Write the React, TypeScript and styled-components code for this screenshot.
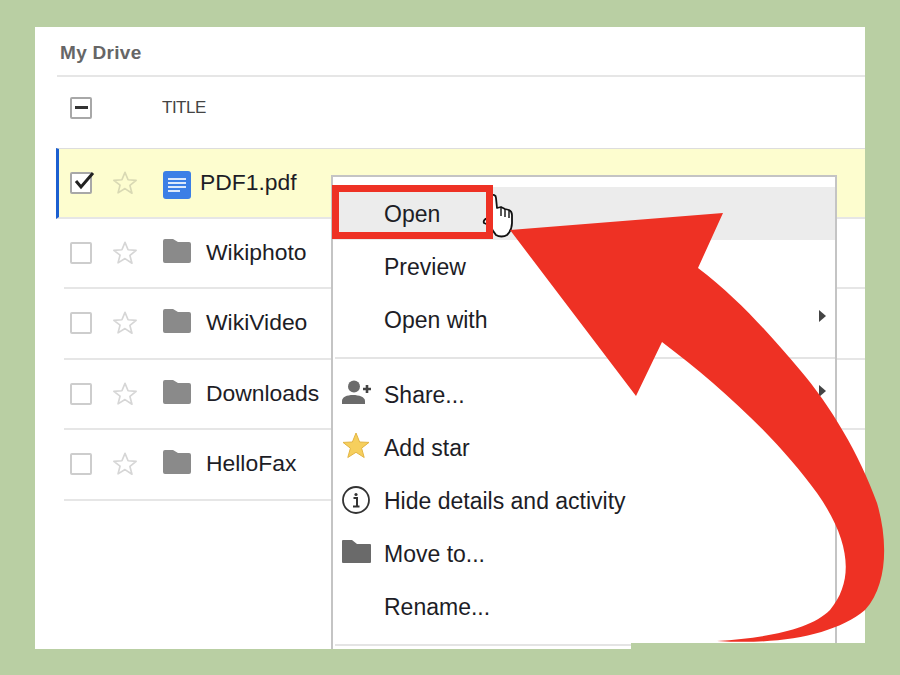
import React from "react";
import styled, { createGlobalStyle } from "styled-components";

const Global = createGlobalStyle`
  html, body { margin: 0; padding: 0; background: #b9cfa3; }
  * { box-sizing: border-box; }
`;

const Page = styled.div`
  position: relative;
  width: 900px;
  height: 675px;
  overflow: hidden;
  background: #b9cfa3;
  padding: 27px 35px 26px;
  font-family: "Liberation Sans", Arial, sans-serif;
`;

const Panel = styled.div`
  position: relative;
  height: 622px;
  background: #fff;
  overflow: hidden;
  padding-left: 22px;
`;

const Crumb = styled.div`
  height: 50px;
  border-bottom: 2px solid #e6e6e6;
  padding: 15px 0 0 3px;
  font-size: 19px;
  line-height: 22px;
  font-weight: 700;
  color: #666;
  letter-spacing: 0.3px;
`;

const HeaderRow = styled.div`
  height: 71px;
  display: flex;
  align-items: center;
  padding: 0 0 10px 13px;
`;

const TitleLabel = styled.span`
  margin-left: 70px;
  font-size: 17px;
  letter-spacing: -0.5px;
  color: #444;
`;

const Row = styled.div<{ $selected?: boolean }>`
  height: 70.5px;
  display: flex;
  align-items: center;
  margin-left: ${(p) => (p.$selected ? "-1px" : "7px")};
  padding-left: 6px;
  border-bottom: 2px solid #e6e6e6;
  ${(p) =>
    p.$selected
      ? "background: #fdfdcf; border-top: 1px solid #ddd; border-left: 3px solid #1c5fd0; padding-left: 11px;"
      : ""}
`;

const Check = styled.div<{ $strong?: boolean }>`
  position: relative;
  width: 22px;
  height: 22px;
  flex: none;
  background: #fff;
  border: 2px solid ${(p) => (p.$strong ? "#a8a8a8" : "#cdcdcd")};
  border-radius: 2px;
  display: flex;
  align-items: center;
  justify-content: center;
`;

const Dash = styled.span`
  width: 13px;
  height: 2.5px;
  background: #333;
`;

const CheckMark = styled.svg`
  position: absolute;
  left: 1px;
  top: -6px;
`;

const RowStar = styled.svg`
  flex: none;
  margin-left: 20px;
`;

const FileIcon = styled.svg`
  flex: none;
  margin: 4px 0 0 25px;
`;

const FolderSlot = styled.div`
  flex: none;
  margin-left: 25px;
  height: 24px;
  margin-top: -4px;
`;

const FileName = styled.span<{ $gap: number }>`
  margin-left: ${(p) => p.$gap}px;
  font-size: 22.9px;
  line-height: 28px;
  color: #1d1d26;
  white-space: nowrap;
  position: relative;
  top: -1px;
`;

const Menu = styled.div`
  position: absolute;
  left: 296px;
  top: 148px;
  width: 506px;
  height: 480px;
  background: #fff;
  border: 2px solid #c4c4c4;
  border-bottom: 0;
  padding-top: 10px;
`;

const Item = styled.div<{ $hover?: boolean }>`
  height: 53px;
  display: flex;
  align-items: center;
  background: ${(p) => (p.$hover ? "#ececec" : "transparent")};
  position: relative;
`;

const IconSlot = styled.div<{ $lift?: number }>`
  width: 51px;
  flex: none;
  height: 100%;
  display: flex;
  align-items: center;
  padding-left: 9px;
  padding-bottom: ${(p) => p.$lift ?? 5}px;
`;

const ItemLabel = styled.span`
  font-size: 23px;
  line-height: 28px;
  color: #1d1d26;
  white-space: nowrap;
`;

const Sub = styled.span`
  position: absolute;
  right: 9px;
  top: 17px;
  width: 0;
  height: 0;
  border-left: 7px solid #444;
  border-top: 6px solid transparent;
  border-bottom: 6px solid transparent;
`;

const Sep = styled.div`
  height: 2px;
  margin: 11px 0 9px 2px;
  background: #e4e4e4;
`;

const Highlight = styled.div`
  position: absolute;
  left: -1px;
  top: 8px;
  width: 161px;
  height: 54px;
  border: 7px solid #ee3124;
`;

const Hand = styled.svg`
  position: absolute;
  left: 147px;
  top: 16px;
`;

const Notch = styled.div`
  position: absolute;
  right: 0;
  bottom: 0;
  width: 234px;
  height: 6px;
  background: #b9cfa3;
`;

const Arrow = styled.svg`
  position: absolute;
  left: 0;
  top: 0;
`;

const Star = ({ stroke = "#d6d6d6" }: { stroke?: string }) => (
  <RowStar width={26} height={26} viewBox="0 0 28 28">
    <path
      d="M14 2.5l3.300 8 8.700.6-6.700 5.500 2.200 8.400L14 20l-7.500 4.600 2.200-8.400L2 11.100l8.700-.6z"
      fill="none"
      stroke={stroke}
      strokeWidth="1.800"
      strokeLinejoin="round"
    />
  </RowStar>
);

const Folder = () => (
  <svg width="28" height="24" viewBox="0 0 28 24">
    <path d="M0 2a2 2 0 0 1 2-2h8l5 3h11a2 2 0 0 1 2 2v17a2 2 0 0 1-2 2H2a2 2 0 0 1-2-2z" fill="#8a8a8a" />
  </svg>
);

const rows = [{ name: "Wikiphoto" }, { name: "WikiVideo" }, { name: "Downloads" }, { name: "HelloFax" }];

export default function App() {
  return (
    <Page>
      <Global />
      <Panel>
        <Crumb>My Drive</Crumb>
        <HeaderRow>
          <Check $strong>
            <Dash />
          </Check>
          <TitleLabel>TITLE</TitleLabel>
        </HeaderRow>
        <Row $selected>
          <Check $strong>
            <CheckMark width="24" height="24" viewBox="0 0 24 24">
              <path d="M3 13l5 6L20 5" fill="none" stroke="#222" strokeWidth="3" />
            </CheckMark>
          </Check>
          <Star stroke="#d9d9b4" />
          <FileIcon width="28" height="28" viewBox="0 0 28 28">
            <rect width="28" height="28" rx="3" fill="#3b7fe6" />
            <path d="M5 8h18M5 12h18M5 16h18M5 20h12" stroke="#dce9fb" strokeWidth="1.800" />
          </FileIcon>
          <FileName $gap={9}>PDF1.pdf</FileName>
        </Row>
        {rows.map((r) => (
          <Row key={r.name}>
            <Check />
            <Star />
            <FolderSlot>
              <Folder />
            </FolderSlot>
            <FileName $gap={15}>{r.name}</FileName>
          </Row>
        ))}
        <Menu>
          <Item $hover>
            <IconSlot />
            <ItemLabel>Open</ItemLabel>
          </Item>
          <Item>
            <IconSlot />
            <ItemLabel>Preview</ItemLabel>
          </Item>
          <Item>
            <IconSlot />
            <ItemLabel>Open with</ItemLabel>
            <Sub />
          </Item>
          <Sep />
          <Item>
            <IconSlot>
              <svg width="30" height="24" viewBox="0 0 30 24">
                <circle cx="12" cy="6.500" r="6" fill="#6b6b6b" />
                <path d="M0 24v-3c0-4 5-6 11-6s12 2 12 6v3z" fill="#6b6b6b" />
                <path d="M21 9h8M25 5v8" stroke="#444" strokeWidth="2.600" />
              </svg>
            </IconSlot>
            <ItemLabel>Share...</ItemLabel>
            <Sub />
          </Item>
          <Item>
            <IconSlot>
              <svg width="28" height="27" viewBox="0 0 28 27">
                <path
                  d="M14 1l3.600 9 9.400.4-7.400 5.800 2.600 9.300L14 20.300l-8.200 5.200 2.600-9.300L1 10.400l9.400-.4z"
                  fill="#f6cf5d"
                  stroke="#e3b543"
                  strokeWidth="1"
                />
              </svg>
            </IconSlot>
            <ItemLabel>Add star</ItemLabel>
          </Item>
          <Item>
            <IconSlot $lift={1}>
              <svg width="28" height="28" viewBox="0 0 28 28">
                <circle cx="14" cy="14" r="13" fill="none" stroke="#333" strokeWidth="1.800" />
                <circle cx="14" cy="8.500" r="1.600" fill="#333" />
                <path d="M11.500 12h3.500v8M11 20.500h6.500" fill="none" stroke="#333" strokeWidth="2" />
              </svg>
            </IconSlot>
            <ItemLabel>Hide details and activity</ItemLabel>
          </Item>
          <Item>
            <IconSlot>
              <svg width="29" height="23" viewBox="0 0 29 23">
                <path d="M0 1a1 1 0 0 1 1-1h9l5 4h13a1 1 0 0 1 1 1v17a1 1 0 0 1-1 1H1a1 1 0 0 1-1-1z" fill="#6a6a6a" />
              </svg>
            </IconSlot>
            <ItemLabel>Move to...</ItemLabel>
          </Item>
          <Item>
            <IconSlot />
            <ItemLabel>Rename...</ItemLabel>
          </Item>
          <Sep />
          <Hand width="36" height="46" viewBox="0 0 36 46">
            <path
              d="M11 3c2-2 5-1 5 2l1 10 4-1 4 2 4 1c2 1 3 2 3 5v8c0 6-3 10-5 12-3 2-8 2-11 0-2-2-4-5-5-9l-7-3c-1-2 1-5 4-4l3 2z"
              fill="#fff"
              stroke="#111"
              strokeWidth="1.800"
              strokeLinejoin="round"
            />
            <path d="M21 14v9M25 16v8M29 17v8" stroke="#111" strokeWidth="1.400" fill="none" />
          </Hand>
          <Highlight />
        </Menu>
        <Notch />
      </Panel>
      <Arrow width="900" height="675" viewBox="0 0 900 675">
        <path
          d="M510 230 L723 213 L698 268 C740 300 770 335 800 370 C830 405 860 455 877 503 C888 540 888 585 865 610 C835 635 780 645 717 641 C765 638 810 630 830 610 C855 580 850 540 817 493 C775 435 715 382 662 342 L636 396 Z"
          fill="#ee3124"
        />
      </Arrow>
    </Page>
  );
}
